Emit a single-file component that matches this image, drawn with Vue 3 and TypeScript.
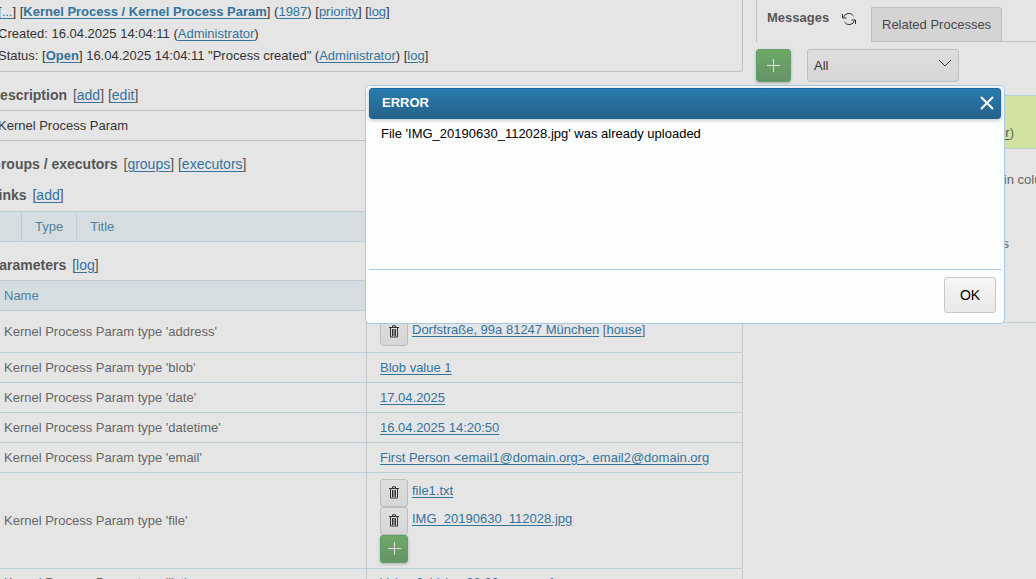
<script setup lang="ts">
import { ref } from 'vue'

interface ParamRow {
  name: string
  value: string
}

const open = ref(true)
const filter = ref('All')
const files: string[] = ['file1.txt', 'IMG_20190630_112028.jpg']
const simpleRows: ParamRow[] = [
  { name: 'blob', value: 'Blob value 1' },
  { name: 'date', value: '17.04.2025' },
  { name: 'datetime', value: '16.04.2025 14:20:50' },
  { name: 'email', value: 'First Person <email1@domain.org>, email2@domain.org' },
]
</script>

<template>
  <div class="page">
    <main class="process">
      <section class="summary">
        <div>[<a href="#">...</a>] [<a href="#"><b>Kernel Process / Kernel Process Param</b></a>] (<a href="#">1987</a>) [<a href="#">priority</a>] [<a href="#">log</a>]</div>
        <div>Created: 16.04.2025 14:04:11 (<a href="#">Administrator</a>)</div>
        <div>Status: [<a href="#"><b>Open</b></a>] 16.04.2025 14:04:11 "Process created" (<a href="#">Administrator</a>) [<a href="#">log</a>]</div>
      </section>

      <h2 class="heading">Description <span>[<a href="#">add</a>] [<a href="#">edit</a>]</span></h2>
      <div class="description">Kernel Process Param</div>

      <h2 class="heading">Groups / executors <span>[<a href="#">groups</a>] [<a href="#">executors</a>]</span></h2>
      <h2 class="heading">Links <span>[<a href="#">add</a>]</span></h2>
      <table class="data links">
        <thead>
          <tr><th class="narrow"></th><th class="type">Type</th><th>Title</th></tr>
        </thead>
      </table>

      <h2 class="heading">Parameters <span>[<a href="#">log</a>]</span></h2>
      <table class="data params">
        <thead>
          <tr><th>Name</th><th>Value</th></tr>
        </thead>
        <tbody>
          <tr class="address">
            <td>Kernel Process Param type 'address'</td>
            <td>
              <div class="item">
                <button class="icon-btn" type="button" aria-label="Delete address">
                  <svg width="10" height="13" viewBox="0 0 10 13"><path d="M0 2.5h10M3.5 2V.8h3V2M1.5 3v9h7V3M3.5 4v7M5 4v7M6.5 4v7" /></svg>
                </button>
                <span><a href="#">Dorfstraße, 99a 81247 München</a> [<a href="#">house</a>]</span>
              </div>
            </td>
          </tr>
          <tr v-for="row in simpleRows" :key="row.name">
            <td>Kernel Process Param type '{{ row.name }}'</td>
            <td><a href="#">{{ row.value }}</a></td>
          </tr>
          <tr class="files">
            <td>Kernel Process Param type 'file'</td>
            <td>
              <div v-for="file in files" :key="file" class="item">
                <button class="icon-btn" type="button" :aria-label="'Delete ' + file">
                  <svg width="10" height="13" viewBox="0 0 10 13"><path d="M0 2.5h10M3.5 2V.8h3V2M1.5 3v9h7V3M3.5 4v7M5 4v7M6.5 4v7" /></svg>
                </button>
                <a href="#">{{ file }}</a>
              </div>
              <button class="add-btn small" type="button" aria-label="Add file">
                <svg width="13" height="13" viewBox="0 0 13 13"><path d="M6.5 0v13M0 6.5h13" /></svg>
              </button>
            </td>
          </tr>
          <tr class="list">
            <td>Kernel Process Param type 'list'</td>
            <td><a href="#">Value 2, Value 03 03 some ref</a></td>
          </tr>
        </tbody>
      </table>
    </main>

    <aside class="side">
      <nav class="tabs">
        <div class="tab active">
          <a href="#">Messages</a>
          <button class="refresh" type="button" aria-label="Refresh messages">
            <svg width="16" height="14" viewBox="0 0 16 14"><path d="M2.5 5.5A5.500 5.500 0 0 1 12.500 4M13.500 8.500A5.500 5.500 0 0 1 3.500 10M1.500 2v4h4M14.500 12V8h-4" /></svg>
          </button>
        </div>
        <div class="tab"><a href="#">Related Processes</a></div>
      </nav>
      <div class="toolbar">
        <button class="add-btn" type="button" aria-label="Add message">
          <svg width="13" height="13" viewBox="0 0 13 13"><path d="M6.5 0v13M0 6.5h13" /></svg>
        </button>
        <div class="select-box">
          <select v-model="filter" aria-label="Message filter">
            <option>All</option>
          </select>
          <svg width="14" height="8" viewBox="0 0 14 8"><path d="M1 1l6 6 6-6" /></svg>
        </div>
      </div>
      <article class="message">
        <header>(<a href="#">Administrator</a>)</header>
        <div class="message-body">
          <p>The values are shown in column</p>
          <p class="short">Parameters</p>
        </div>
      </article>
    </aside>

    <div v-if="open" class="dialog" role="dialog" aria-labelledby="dialog-title">
      <div class="titlebar">
        <span id="dialog-title">ERROR</span>
        <button type="button" aria-label="Close" @click="open = false">
          <svg width="14" height="14" viewBox="0 0 14 14"><path d="M1 1l12 12M13 1L1 13" /></svg>
        </button>
      </div>
      <div class="content">File 'IMG_20190630_112028.jpg' was already uploaded</div>
      <div class="actions"><button type="button" @click="open = false">OK</button></div>
    </div>
  </div>
</template>

<style>
html,
body {
  background: #e5e5e5;
  overflow: hidden;
}
</style>

<style scoped>
* {
  box-sizing: border-box;
}

.page {
  position: relative;
  display: grid;
  grid-template-columns: minmax(0, 753fr) minmax(0, 280fr);
  column-gap: 13px;
  height: 100vh;
  margin-left: -10px;
  overflow: hidden;
  background: #e5e5e5;
  color: #333;
  font: 13px/20px "Liberation Sans", Arial, sans-serif;
}

a {
  color: #34739c;
  text-underline-offset: 2px;
}

button,
select {
  margin: 0;
  font: inherit;
}

svg {
  display: block;
  fill: none;
  stroke: currentColor;
}

.summary {
  display: grid;
  row-gap: 2px;
  padding: 2px 7px 5px;
  border: 1px solid #bfbfbf;
  border-top: 0;
  border-radius: 0 0 4px 4px;
}

.heading {
  margin: 0;
  padding: 14px 0 6px;
  color: #555;
  font-size: 14px;
  line-height: 18px;
}

.heading + .heading {
  padding: 7px 0;
}

.heading span {
  margin-left: 2px;
  font-weight: 400;
}

.description {
  padding: 5px 7px 4px;
  border: 1px solid #bfbfbf;
}

.data {
  width: 100%;
  border-collapse: collapse;
}

.data th,
.data td {
  height: 30px;
  padding: 0 13px;
  border: 1px solid #bdcdd6;
  text-align: left;
}

.data th {
  background: #d5dde0;
  color: #51809f;
  font-weight: 400;
}

.data td {
  color: #666;
}

.narrow {
  width: 31px;
}

.type {
  width: 55px;
}

.params {
  table-layout: fixed;
}

.data .address td {
  height: 42px;
}

.data .files td {
  height: 96px;
}

.data .list td {
  padding-bottom: 2px;
}

.item {
  display: flex;
  gap: 4px;
  height: 28px;
  line-height: 24px;
}

.icon-btn {
  display: grid;
  place-items: center;
  width: 28px;
  height: 28px;
  padding: 0;
  border: 1px solid #bdbdbd;
  border-radius: 3px;
  background: linear-gradient(#dedede, #d6d6d6);
  color: #333;
}

.add-btn {
  display: grid;
  place-items: center;
  width: 35px;
  height: 33px;
  padding: 0;
  border: 1px solid #60a068;
  border-radius: 3px;
  background: linear-gradient(#6ca968, #669367);
  box-shadow: 0 1px 3px #aaa;
  color: #e5e5e5;
}

.add-btn.small {
  width: 28px;
  height: 28px;
}

.tabs {
  display: flex;
  align-items: flex-end;
  height: 42px;
  border-bottom: 1px solid #bfbfbf;
  white-space: nowrap;
}

.tab {
  height: 35px;
  margin-bottom: -1px;
  padding: 7px 10px;
  border: 1px solid #bfbfbf;
  border-radius: 0 3px 0 0;
  background: #d4d4d4;
}

.tab a {
  color: #484848;
  text-decoration: none;
}

.tab.active {
  display: flex;
  gap: 12px;
  width: 115px;
  height: 42px;
  padding-top: 8px;
  border-width: 0 0 0 1px;
  background: #e5e5e5;
}

.tab.active a {
  color: #555;
  font-weight: 700;
}

.refresh {
  height: 22px;
  padding: 0;
  border: 0;
  background: none;
  color: #333;
}

.toolbar {
  display: flex;
  gap: 16px;
  padding-top: 7px;
}

.select-box {
  position: relative;
  width: 152px;
}

.select-box select {
  width: 100%;
  height: 33px;
  padding: 0 6px;
  appearance: none;
  border: 1px solid #bfbfbf;
  border-radius: 3px;
  background: linear-gradient(#dedede, #d6d6d6);
  color: #333;
}

.select-box svg {
  position: absolute;
  top: 10px;
  right: 7px;
  pointer-events: none;
}

.message {
  margin-top: 13px;
  border: 1px solid #bdcdd6;
  border-right: 0;
  color: #666;
}

.message header {
  padding: 27px 22px 5px 0;
  border-bottom: 1px solid #bdcdd6;
  background: #d2e2a0;
  text-align: right;
}

.message header a {
  color: #555;
}

.message-body {
  height: 173px;
  padding: 21px 0 0 116px;
  white-space: nowrap;
}

.message-body p {
  margin: 0 0 44px;
}

.message-body .short {
  width: 136px;
  text-align: right;
}

.dialog {
  position: absolute;
  top: 85px;
  right: 31px;
  display: flex;
  flex-direction: column;
  width: 640px;
  max-width: 90vw;
  min-height: 239px;
  padding: 2px 3px;
  border: 1px solid #a5c9e1;
  border-radius: 5px;
  background: #fcfdfd;
  color: #000;
}

.titlebar {
  display: flex;
  align-items: center;
  justify-content: space-between;
  height: 31px;
  padding: 0 6px 1px 12px;
  border: 1px solid #1768a0;
  border-radius: 3px;
  background: linear-gradient(#297aae, #26638a);
  box-shadow: 0 1px 4px #bbb;
  color: #fff;
  font-weight: 700;
}

.titlebar button {
  padding: 0;
  border: 0;
  background: none;
  color: #fff;
}

.titlebar path {
  stroke-width: 2;
}

.content {
  flex: 1;
  padding: 5px 12px;
}

.actions {
  display: flex;
  justify-content: flex-end;
  padding: 7px 5px 8px;
  border-top: 1px solid #a5c9e1;
}

.actions button {
  width: 52px;
  height: 36px;
  border: 1px solid #c5c8ca;
  border-radius: 3px;
  background: linear-gradient(#f5f5f5, #e9e9e9);
  color: #000;
  font-size: 14px;
}
</style>
